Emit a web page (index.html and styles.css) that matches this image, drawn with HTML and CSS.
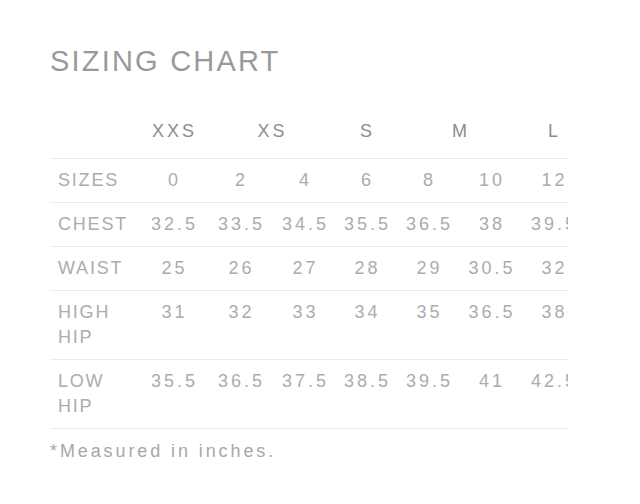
FILE: index.html
```html
<!DOCTYPE html>
<html>
<head>
<meta charset="utf-8">
<link rel="stylesheet" href="styles.css">
</head>
<body>
<div class="page">
  <h1 class="title">SIZING CHART</h1>
  <div class="clip">
    <table class="chart">
      <colgroup>
        <col class="c-label"><col class="c68"><col class="c66"><col class="c62"><col class="c62"><col class="c62"><col class="c63"><col class="c62">
      </colgroup>
      <thead>
        <tr class="head">
          <th></th>
          <th>XXS</th>
          <th colspan="2">XS</th>
          <th>S</th>
          <th colspan="2">M</th>
          <th>L</th>
        </tr>
      </thead>
      <tbody>
        <tr><td class="label">SIZES</td><td>0</td><td>2</td><td>4</td><td>6</td><td>8</td><td>10</td><td>12</td></tr>
        <tr><td class="label">CHEST</td><td>32.5</td><td>33.5</td><td>34.5</td><td>35.5</td><td>36.5</td><td>38</td><td>39.5</td></tr>
        <tr><td class="label">WAIST</td><td>25</td><td>26</td><td>27</td><td>28</td><td>29</td><td>30.5</td><td>32</td></tr>
        <tr><td class="label">HIGH HIP</td><td>31</td><td>32</td><td>33</td><td>34</td><td>35</td><td>36.5</td><td>38</td></tr>
        <tr><td class="label">LOW HIP</td><td>35.5</td><td>36.5</td><td>37.5</td><td>38.5</td><td>39.5</td><td>41</td><td>42.5</td></tr>
      </tbody>
    </table>
  </div>
  <p class="note">*Measured in inches.</p>
</div>
</body>
</html>
```
FILE: styles.css
```css
html, body {
  margin: 0;
  padding: 0;
  background: #ffffff;
}
body {
  font-family: "Liberation Sans", Arial, Helvetica, sans-serif;
}
.page {
  padding-left: 50px;
  padding-top: 44px;
}
.title {
  margin: 0;
  font-size: 29px;
  line-height: 34px;
  font-weight: normal;
  letter-spacing: 2.2px;
  color: #999999;
}
.clip {
  width: 518px;
  overflow: hidden;
  margin-top: 32px;
}
.chart {
  table-layout: fixed;
  width: 534px;
  border-collapse: collapse;
  border-spacing: 0;
}
.c-label { width: 89px; }
.c62 { width: 62px; }
.c63 { width: 63px; }
.c66 { width: 66px; }
.c68 { width: 68px; }
.chart th,
.chart td {
  padding: 9px 0 9px 3px;
  font-size: 18px;
  line-height: 25px;
  text-align: center;
  vertical-align: top;
  white-space: nowrap;
}
.chart th {
  font-weight: normal;
  color: #8e8e8e;
  letter-spacing: 3px;
  padding-bottom: 14px;
}
.chart tbody tr {
  border-top: 1px solid #ebebeb;
}
.chart tbody tr:last-child {
  border-bottom: 1px solid #ebebeb;
}
.chart td {
  color: #acacac;
  letter-spacing: 3px;
}
.chart td.label {
  text-align: left;
  padding-left: 8px;
  white-space: normal;
  letter-spacing: 1.8px;
}
.note {
  margin: 10px 0 0 0;
  font-size: 18px;
  line-height: 25px;
  letter-spacing: 2.9px;
  color: #a8a8a8;
}
```
